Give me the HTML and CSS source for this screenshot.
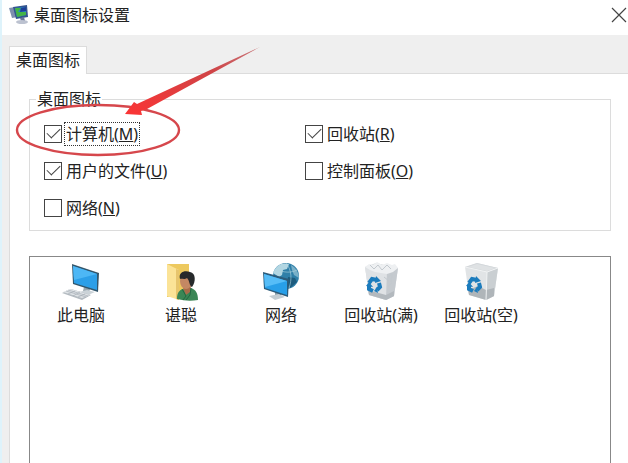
FILE: index.html
```html
<!DOCTYPE html>
<html lang="zh-CN">
<head>
  <meta charset="UTF-8">
  <meta name="viewport" content="width=device-width, initial-scale=1.0">
  <title>桌面图标设置</title>
  <link rel="stylesheet" href="styles.css">
</head>
<body>
  <div class="window">
    <header class="title-bar">
      <svg class="title-icon" width="20" height="22" viewBox="0 0 20 22" aria-hidden="true">
        <path d="M0 4L6 3L9 13L3 14Z" fill="#7e8fae"/>
        <path d="M4 3L18 1L19 13L7 15Z" fill="#34558f"/>
        <path d="M6 4L17 3L17 11L8 13Z" fill="#2587c9"/>
        <path d="M6 4L12 4L9 8L17 8L17 11L8 13Z" fill="#43b447"/>
        <path d="M12 4L17 3V7L11 8Z" fill="#1d3e96"/>
        <path d="M11 14L15 13L16 17H12Z" fill="#68769a"/>
        <ellipse cx="13" cy="18" rx="6" ry="2" fill="#bcc2d0"/>
      </svg>
      <h1>桌面图标设置</h1>
      <button class="close-btn" type="button" aria-label="关闭">
        <svg width="16" height="16" viewBox="0 0 16 16"><path d="M1 1L15 15M15 1L1 15" stroke="#444" stroke-width="1.2"/></svg>
      </button>
    </header>

    <main class="content">
      <div class="tabs" role="tablist">
        <button class="tab" type="button" role="tab" aria-selected="true">桌面图标</button>
      </div>

      <div class="panel" role="tabpanel">
        <fieldset class="group">
          <legend>桌面图标</legend>
          <div class="options">
            <label class="option"><input type="checkbox" checked><span class="focused">计算机(<u>M</u>)</span></label>
            <label class="option"><input type="checkbox" checked><span>回收站(<u>R</u>)</span></label>
            <label class="option"><input type="checkbox" checked><span>用户的文件(<u>U</u>)</span></label>
            <label class="option"><input type="checkbox"><span>控制面板(<u>O</u>)</span></label>
            <label class="option"><input type="checkbox"><span>网络(<u>N</u>)</span></label>
          </div>
        </fieldset>

        <ul class="icon-list">
          <li>
            <svg width="40" height="40" viewBox="0 0 40 40" aria-hidden="true">
              <path d="M23 26L29 28L28 31L22 30Z" fill="#9aa8b0"/>
              <path d="M18 31L26 29L34 31L27 34Z" fill="#cbd3d8"/>
              <path d="M11 3L38 12L37 31L12 23Z" fill="#33566b"/>
              <path d="M12 5L36 13L36 29L13 22Z" fill="#2c9fe8"/>
              <path d="M12 5L36 13L13 19Z" fill="#4db7f5"/>
              <path d="M1 32L10 28L30 34L21 39Z" fill="#b4bbc1"/>
              <path d="M2 31L10 28L29 34L21 37Z" fill="#dfe3e6"/>
              <path d="M5 30L25 36M7 29L27 35M7 33L14 30M12 35L19 31M17 36L24 33" stroke="#a1aab1" stroke-width=".6"/>
            </svg>
            <span>此电脑</span>
          </li>
          <li>
            <svg width="40" height="40" viewBox="0 0 40 40" aria-hidden="true">
              <path d="M6 3H28V34L6 36Z" fill="#edc95f"/>
              <path d="M6 3L18 9V39L6 35Z" fill="#fbe397"/>
              <path d="M15 8L18 9V39L15 38Z" fill="#e7c56d"/>
              <path d="M16 38C16 31 19 28 24 28L30 27C35 29 37 32 37 39Q27 41 16 38Z" fill="#3b8655"/>
              <path d="M22 27L30 25L29 31L25 34Z" fill="#a96c49"/>
              <path d="M21 28L25 35L22 39M30 27L29 34L25 39" fill="none" stroke="#236641" stroke-width="1"/>
              <ellipse cx="25" cy="20" rx="6" ry="8" fill="#c48863"/>
              <path d="M19 18C17 11 24 9 29 11C35 12 35 21 31 26C28 25 29 20 26 17C23 19 21 17 19 18Z" fill="#27292b"/>
            </svg>
            <span>谌聪</span>
          </li>
          <li>
            <svg width="40" height="40" viewBox="0 0 40 40" aria-hidden="true">
              <circle cx="25" cy="15" r="13" fill="#2f7fa8"/>
              <path d="M12 12C15 4 21 1 28 3L26 8L22 9L21 14L18 16Z" fill="#b2d6e2"/>
              <path d="M30 4C35 7 38 12 38 17L33 14L31 9Z" fill="#79b0c8"/>
              <path d="M27 16L34 17L36 21L29 27L26 23Z" fill="#1d5c7e"/>
              <path d="M15 8C23 12 30 12 36 9M25 2C31 9 31 19 28 27" fill="none" stroke="#b4d6e0" stroke-width=".6"/>
              <path d="M14 31H20V36H14Z" fill="#899ca7"/>
              <path d="M8 35L18 33L24 36L14 39Z" fill="#c3cdd3"/>
              <path d="M2 11L28 18L27 36L3 28Z" fill="#2c5c7b"/>
              <path d="M3 13L26 20L26 34L4 27Z" fill="#289fe8"/>
              <path d="M3 13L26 20L4 26Z" fill="#56bdf7"/>
            </svg>
            <span>网络</span>
          </li>
          <li>
            <svg width="40" height="40" viewBox="0 0 40 40" aria-hidden="true">
              <path d="M4 6L15 2L37 7L33 35L25 39L8 34Z" fill="#d8dcdf"/>
              <path d="M4 6L26 11L25 39L8 34Z" fill="#dfe2e5"/>
              <path d="M26 11L37 7L33 35L25 39Z" fill="#c5cacf"/>
              <path d="M7 29L25 34L33 30L33 35L25 39L8 34Z" fill="#b3b9be"/>
              <path d="M4 6L8 3L12 4L16 1L21 4L26 2L31 4L34 3L37 7L32 11L26 13L20 12L14 11L9 9Z" fill="#eef0f2"/>
              <path d="M9 4L13 8L17 4L21 9L26 4L30 8M27 16L31 13L30 21M23 16L28 20M27 25L31 22" fill="none" stroke="#c3c9ce" stroke-width="1"/>
              <g fill="none" stroke="#1c7cbd" stroke-width="4">
                <path d="M8 22L11 18L16 19"/><path d="M18 22L19 26L16 29"/><path d="M12 30L8 28L8 24"/>
              </g>
              <path d="M15 15L20 20L14 22ZM17 32L13 30L16 26ZM5 25L8 21L12 26Z" fill="#1c7cbd"/>
            </svg>
            <span>回收站(满)</span>
          </li>
          <li>
            <svg width="40" height="40" viewBox="0 0 40 40" aria-hidden="true">
              <path d="M4 6L16 2L37 7L33 35L25 39L8 34Z" fill="#e1e4e6"/>
              <path d="M4 6L16 2L37 7L26 11Z" fill="#d3d7da"/>
              <path d="M7 6L16 3L34 7L26 10Z" fill="#dfe2e4"/>
              <path d="M26 11L37 7L33 35L25 39Z" fill="#cacfd2"/>
              <path d="M7 29L17 25L25 29L33 27L33 35L25 39L8 34Z" fill="#afb5b9"/>
              <path d="M4 6L26 11L37 7M26 11L25 39" fill="none" stroke="#f1f3f4" stroke-width="1"/>
              <g fill="none" stroke="#1c7cbd" stroke-width="4">
                <path d="M8 22L11 18L16 19"/><path d="M18 22L19 26L16 29"/><path d="M12 30L8 28L8 24"/>
              </g>
              <path d="M15 15L20 20L14 22ZM17 32L13 30L16 26ZM5 25L8 21L12 26Z" fill="#1c7cbd"/>
            </svg>
            <span>回收站(空)</span>
          </li>
        </ul>
      </div>
    </main>

    <!-- red circle and arrow around the first option -->
    <svg class="callout" width="270" height="160" viewBox="0 0 270 160" aria-hidden="true">
      <defs>
        <linearGradient id="arrowFill" x1="1" y1="0" x2="0" y2="1">
          <stop offset="0" stop-color="#c8787b"/>
          <stop offset=".35" stop-color="#cf4447"/>
          <stop offset="1" stop-color="#fb3434"/>
        </linearGradient>
      </defs>
      <ellipse cx="98" cy="130" rx="81" ry="25" fill="none" stroke="#d6474c" stroke-width="2.4"/>
      <path d="M260 47L137 104L134 102L125 114L142 115L141 111L147 109Z" fill="url(#arrowFill)"/>
    </svg>
  </div>
</body>
</html>
```
FILE: styles.css
```css
* {
  box-sizing: border-box;
}
body {
  margin: 0;
  font-family: "Noto Sans", "Noto Sans CJK SC", sans-serif;
  font-size: 16px;
  line-height: 22px;
  color: #222;
}
button {
  font: inherit;
  color: inherit;
}
.window {
  position: relative;
  display: flex;
  flex-direction: column;
  min-height: 100vh;
  background-color: #efefef;
  border-left: 2px solid #def3fb;
}
.title-bar {
  display: flex;
  align-items: center;
  height: 35px;
  padding: 0 1px 5px 7px;
  background-color: #fff;
}
.title-icon {
  margin-right: 5px;
}
h1 {
  flex: 1;
  margin: 0;
  font-size: 16px;
  font-weight: normal;
}
.close-btn {
  display: flex;
  padding: 0;
  border: 0;
  background: none;
}
.content {
  flex: 1;
  display: flex;
  flex-direction: column;
  padding: 11px 0 0 7px;
}
.tabs {
  display: flex;
}
.tab {
  height: 28px;
  margin-bottom: -1px;
  padding: 0 6px 2px;
  border: 1px solid #dcdcdc;
  border-bottom: 0;
  background-color: #fff;
  z-index: 1;
}
.panel {
  flex: 1;
  display: flex;
  flex-direction: column;
  padding: 14px 17px 0 19px;
  border: 1px solid #dcdcdc;
  border-width: 1px 0 0 1px;
  background-color: #fff;
}
.group {
  min-width: 0;
  margin: 0 0 25px;
  padding: 5px 14px 4px;
  border: 1px solid #dcdcdc;
}
legend {
  margin-left: -8px;
  padding: 0 1px;
}
.options {
  display: grid;
  grid-template-columns: 261px 1fr;
  grid-auto-rows: 37px;
}
.option {
  display: flex;
  align-items: center;
  justify-self: start;
  gap: 3px;
}
.option span {
  padding: 0 1px;
}
.option .focused {
  outline: 1px dotted #333;
}
input[type="checkbox"] {
  appearance: none;
  display: grid;
  place-items: center;
  width: 18px;
  height: 18px;
  margin: 0;
  border: 1px solid #444;
  background-color: #fff;
}
input[type="checkbox"]:checked::before {
  content: "";
  width: 12px;
  height: 6px;
  margin-bottom: 4px;
  border: solid #444;
  border-width: 0 0 1px 1px;
  transform: rotate(-45deg);
}
.icon-list {
  flex: 1;
  display: flex;
  flex-wrap: wrap;
  align-content: flex-start;
  margin: 0;
  padding: 4px 0 0 1px;
  list-style: none;
  border: 1px solid #888;
  border-bottom: 0;
}
.icon-list li {
  display: flex;
  flex-direction: column;
  align-items: center;
  gap: 3px;
  width: 100px;
}
.callout {
  position: absolute;
  top: 0;
  left: -2px;
  pointer-events: none;
}
```
